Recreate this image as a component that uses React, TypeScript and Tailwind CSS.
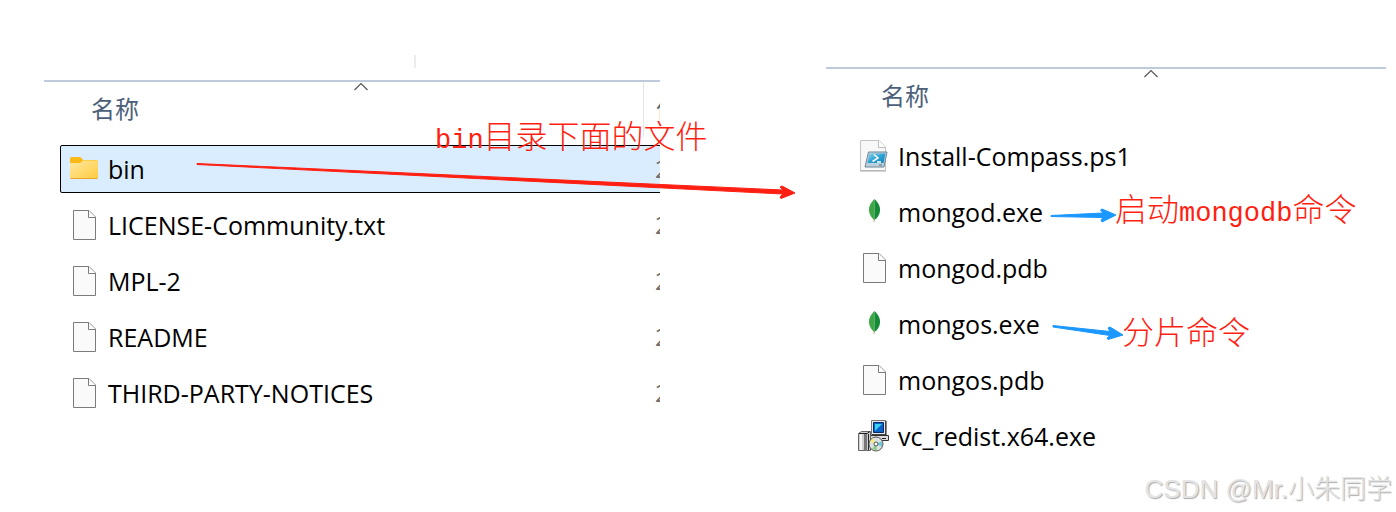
import type { ReactNode } from 'react';
import clsx from 'clsx';

type Entry = {
  name: string;
  icon: ReactNode;
  date?: string;
  selected?: boolean;
};

function FileIcon() {
  return (
    <svg width="32" height="32" viewBox="0 0 32 32" className="shrink-0" aria-hidden="true">
      <path d="M5.5 1.5H21L27.5 8V30.5H5.5Z" fill="#fafafa" stroke="#7b7b7b" />
      <path d="M20.5 1.5V8.5H27.5" fill="#fff" stroke="#7b7b7b" />
    </svg>
  );
}

function FolderIcon() {
  return (
    <svg width="32" height="32" viewBox="0 0 32 32" className="shrink-0" aria-hidden="true">
      <defs>
        <linearGradient id="folder" x1="0" y1="0" x2="1" y2="1">
          <stop offset="0" stopColor="#ffe9a3" />
          <stop offset="1" stopColor="#ffcb3d" />
        </linearGradient>
      </defs>
      <path d="M2 5.5Q2 4 3.500 4H11.500Q13 4 14 5.500L15 7H28.500Q30 7 30 8.500V12H2Z" fill="#fbb917" />
      <path d="M2 10H12.500L15 7.500H30V24.500Q30 26 28.500 26H3.500Q2 26 2 24.500Z" fill="url(#folder)" />
      <path d="M2.500 25.500H29.500" stroke="#e9a52c" />
    </svg>
  );
}

function PowerShellIcon() {
  return (
    <svg width="32" height="32" viewBox="0 0 32 32" className="shrink-0" aria-hidden="true">
      <defs>
        <linearGradient id="shell" x1="0" y1="0" x2="1" y2="1">
          <stop offset="0" stopColor="#8fd3ee" />
          <stop offset="0.5" stopColor="#2ba3d4" />
          <stop offset="1" stopColor="#1583bd" />
        </linearGradient>
      </defs>
      <path d="M2.500 .5H21L27.500 7V30.500H2.500Z" fill="#f8f8f8" stroke="#c4c4c4" />
      <path d="M20.500 .5V7.500H27.500" fill="#fff" stroke="#bdbdbd" />
      <path d="M2 31H28" stroke="#aaa" />
      <path d="M10.500 12H29L26 27H7Z" fill="#bcd0dc" stroke="#6f8796" />
      <path d="M11.500 13.500H27.500L25.500 23H9.500Z" fill="url(#shell)" />
      <path d="M16 14.500L20 18L14.500 21.500M19 22H23" fill="none" stroke="#fff" strokeWidth="1.5" />
      <path d="M21 25H24" stroke="#4d6b7c" />
    </svg>
  );
}

function MongoIcon() {
  return (
    <svg width="32" height="32" viewBox="0 0 32 32" className="shrink-0" aria-hidden="true">
      <path d="M16 22V26" stroke="#b6a98c" />
      <path d="M16.500 3C13 6.500 10.500 10 11 15C11.500 19.500 14 22 16.500 24Z" fill="#3fa648" />
      <path d="M16.500 3C20 6.500 22.500 10 22 15C21.500 19.500 19 22 16.500 24Z" fill="#138a35" />
    </svg>
  );
}

function InstallerIcon() {
  return (
    <svg width="32" height="32" viewBox="0 0 32 32" className="shrink-0" aria-hidden="true">
      {/* Computer */}
      <path d="M13.500 .5H27.500V14.500H13.500Z" fill="#e8e8e8" stroke="#777" />
      <path d="M28 1V15H14" fill="none" stroke="#111" />
      <path d="M15.500 2.500H25.500V12.500H15.500Z" fill="#0a62c8" stroke="#0a2a66" />
      <path d="M17 4H24L17 11Z" fill="#38d2f2" />
      <path d="M12.500 15.500H30.500V20.500H12.500Z" fill="#ddd" stroke="#333" />
      <path d="M24 18.500H28" stroke="#222" />
      {/* Box */}
      <path d="M.5 13.500L3.500 11.500H12.500V30.500H.5Z" fill="#d0d0d0" stroke="#666" />
      <path d="M6 14H9V31H6Z" fill="#777" />
      <path d="M3 14V30" stroke="#f6f6f6" strokeWidth="2" />
      <path d="M1 13.500H9L12 11.500M10.500 14V30" fill="none" stroke="#222" />
      {/* Disc */}
      <circle cx="18" cy="24" r="7" fill="#dbe2e4" stroke="#555" />
      <path d="M18 24L12 22L15 18Z" fill="#f5e87c" />
      <path d="M18 24L24 21V27Z" fill="#72c9d7" />
      <path d="M18 24L14 29L19 30.500Z" fill="#8ccf83" />
      <circle cx="18" cy="24" r="2" fill="#fff" stroke="#555" />
    </svg>
  );
}

const rootFiles: Entry[] = [
  { name: 'bin', icon: <FolderIcon />, date: '2', selected: true },
  { name: 'LICENSE-Community.txt', icon: <FileIcon />, date: '2' },
  { name: 'MPL-2', icon: <FileIcon />, date: '2' },
  { name: 'README', icon: <FileIcon />, date: '2' },
  { name: 'THIRD-PARTY-NOTICES', icon: <FileIcon />, date: '2' },
];

const binFiles: Entry[] = [
  { name: 'Install-Compass.ps1', icon: <PowerShellIcon /> },
  { name: 'mongod.exe', icon: <MongoIcon /> },
  { name: 'mongod.pdb', icon: <FileIcon /> },
  { name: 'mongos.exe', icon: <MongoIcon /> },
  { name: 'mongos.pdb', icon: <FileIcon /> },
  { name: 'vc_redist.x64.exe', icon: <InstallerIcon /> },
];

function FileTable({ files, dateLabel, className }: { files: Entry[]; dateLabel?: string; className?: string }) {
  return (
    <div className={clsx('overflow-hidden border-t-2 border-[#bfcbdd]', className)}>
      <table className="-mt-2 w-[109%] table-fixed border-separate border-spacing-x-0 border-spacing-y-2">
        <thead>
          <tr className="h-[55px] text-[24px] text-[#4c607a]">
            <th className="p-0 text-left align-top font-normal">
              <div className="flex justify-center pl-[18px]">
                <svg width="14" height="9" viewBox="0 0 14 9" aria-hidden="true">
                  <path d="M.5 8L7 1.500L13.500 8" fill="none" stroke="#555" strokeWidth="1.2" />
                </svg>
              </div>
              <span className="block pl-[31px] leading-9">名称</span>
            </th>
            {dateLabel && (
              <th className="w-[71px] border-l border-[#e5e5e5] p-0 pl-3 text-left align-top font-normal">
                <span className="block pt-[9px] leading-9">{dateLabel}</span>
              </th>
            )}
          </tr>
        </thead>
        <tbody>
          {files.map((file) => (
            <tr
              key={file.name}
              className={clsx('h-12', file.selected && 'rounded-xs bg-[#d9edff] outline outline-black -outline-offset-1')}
            >
              <td className="p-0">
                <div className="flex items-center gap-2 pl-2">
                  {file.icon}
                  <span className="whitespace-nowrap text-[25px] leading-8">{file.name}</span>
                </div>
              </td>
              {file.date && <td className="p-0 pl-3 text-[24px] text-[#6d6d6d]">{file.date}</td>}
            </tr>
          ))}
        </tbody>
      </table>
    </div>
  );
}

function Note({ children, className }: { children: ReactNode; className: string }) {
  return (
    <p className={clsx('absolute whitespace-nowrap text-[32px] leading-10 font-light text-[#ff1f12]', className)}>
      {children}
    </p>
  );
}

function Latin({ children }: { children: string }) {
  return <span className="font-['Liberation_Mono',monospace] text-[27px]">{children}</span>;
}

export default function App() {
  return (
    <main className="relative overflow-hidden bg-white pb-12 font-['Open_Sans','Noto_Sans_CJK_SC',sans-serif] text-black">
      <div className="grid grid-cols-[11fr_10fr] gap-[166px] pr-[10px] pl-11">
        <section>
          <div className="flex h-20 items-end pb-3 pl-[370px]">
            <span className="h-[13px] w-[2px] bg-[#ededed]" />
          </div>
          <FileTable files={rootFiles} dateLabel="件" className="pl-4" />
        </section>
        <section className="pt-[67px]">
          <FileTable files={binFiles} className="pl-6" />
        </section>
      </div>

      {/* Arrows */}
      <svg className="absolute top-0 left-0" width="1396" height="512" viewBox="0 0 1396 512" aria-hidden="true">
        <g fill="#ff1f12" stroke="#ff1f12" strokeLinejoin="round">
          <path d="M197 163.500L783 190L780 187L782 186L795 193L781 198.500L780 197L783 194L197 164.500Z" />
        </g>
        <g fill="#1b98ff" stroke="#1b98ff" strokeLinejoin="round">
          <path d="M1051 215.500L1103 213L1100.500 210L1102 209L1116 215L1102 222L1101 220L1103 217.500L1051 216.500Z" />
          <path d="M1053 325.500L1110 331.500L1108 328L1110 327L1123 335L1108 339.500L1107 338L1110 335.500L1053 327Z" />
        </g>
      </svg>

      {/* Notes */}
      <Note className="top-[116px] left-[435px]">
        <Latin>bin</Latin>目录下面的文件
      </Note>
      <Note className="top-[189px] left-[1115px]">
        启动<Latin>mongodb</Latin>命令
      </Note>
      <Note className="top-[312px] left-[1122px]">分片命令</Note>

      <p className="absolute right-1 bottom-[9px] font-['Liberation_Sans','Noto_Sans_CJK_SC',sans-serif] text-[26px] leading-9 font-light text-[#e4e4e4] [text-shadow:1px_1px_1px_#aaa]">
        CSDN @Mr.小朱同学
      </p>
    </main>
  );
}
